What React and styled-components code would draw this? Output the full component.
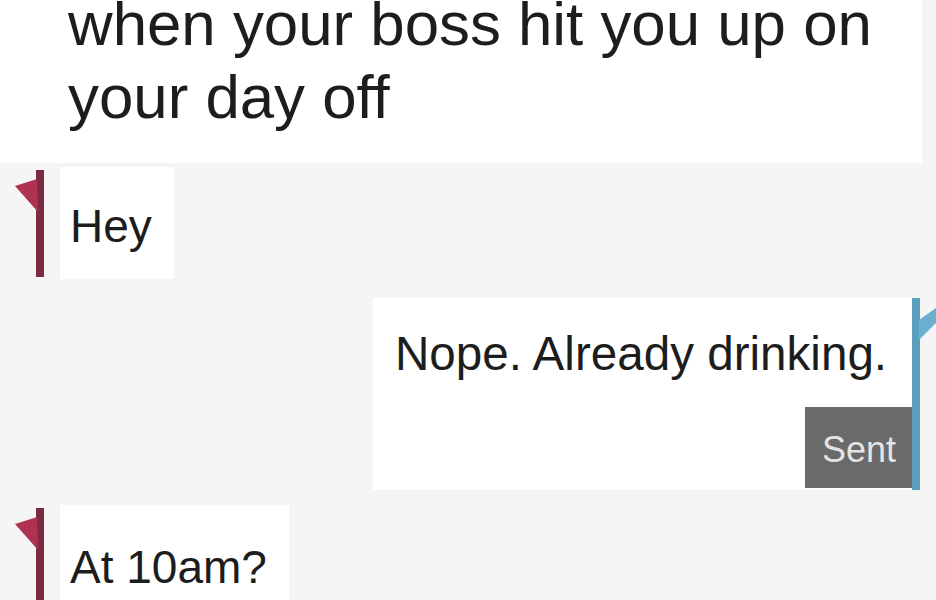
import React from "react";
import styled, { createGlobalStyle } from "styled-components";

function IncomingMarker({ height }) {
  return (
    <MarkerSlot>
      <svg width="60" height={height} viewBox={`0 0 60 ${height}`}>
        <rect x="36" y="0" width="8" height={height} fill="#7b2c40" />
        <polygon points="15,16 37,9 38,42" fill="#b03251" />
      </svg>
    </MarkerSlot>
  );
}

function OutgoingMarker() {
  return (
    <TailSlot>
      <svg width="24" height="192" viewBox="0 0 24 192">
        <rect x="0" y="0" width="8" height="192" fill="#5b9fbe" />
        <polygon points="7,22 24,10 24,25 7,42" fill="#6aafcf" />
      </svg>
    </TailSlot>
  );
}

function App() {
  return (
    <>
      <GlobalStyle />
      <Screen>
        <Caption>
          <CaptionText>
            when your boss hit you up on
            <br />
            your day off
          </CaptionText>
        </Caption>

        <Row $top={4}>
          <IncomingMarker height={107} />
          <Bubble $pt={36} $pb={30}>
            Hey
          </Bubble>
        </Row>

        <Row $top={19} $out>
          <OutBubble>
            <OutText>Nope. Already drinking.</OutText>
            <Status>Sent</Status>
          </OutBubble>
          <OutgoingMarker />
        </Row>

        <Row $top={15}>
          <IncomingMarker height={110} />
          <Bubble $pt={39} $pb={40}>
            At 10am?
          </Bubble>
        </Row>
      </Screen>
    </>
  );
}

export default App;

const GlobalStyle = createGlobalStyle`
  body {
    margin: 0;
    background: #f5f5f5;
    font-family: "Liberation Sans", Arial, sans-serif;
    color: #1d1d1d;
  }
`;

const Screen = styled.div`
  width: 936px;
  height: 600px;
  overflow: hidden;
  display: flex;
  flex-direction: column;
`;

const Caption = styled.div`
  width: 922px;
  height: 163px;
  flex-shrink: 0;
  box-sizing: border-box;
  padding-left: 68px;
  background: #ffffff;
  overflow: hidden;
  font-size: 61.8px;
  line-height: 73px;
`;

const CaptionText = styled.p`
  margin: -13px 0 0;
  white-space: nowrap;
`;

const Row = styled.div`
  display: flex;
  flex-shrink: 0;
  align-items: ${(p) => (p.$out ? "stretch" : "flex-start")};
  justify-content: ${(p) => (p.$out ? "flex-end" : "flex-start")};
  margin-top: ${(p) => p.$top}px;
`;

const MarkerSlot = styled.div`
  width: 60px;
  flex-shrink: 0;
  padding-top: 3px;
  line-height: 0;
`;

const TailSlot = styled.div`
  width: 24px;
  flex-shrink: 0;
  line-height: 0;
`;

const Bubble = styled.div`
  background: #ffffff;
  padding: ${(p) => p.$pt}px 22px ${(p) => p.$pb}px 10px;
  font-size: 46px;
  line-height: 46px;
  white-space: nowrap;
`;

const OutBubble = styled.div`
  display: flex;
  flex-direction: column;
  width: 539px;
  box-sizing: border-box;
  background: #ffffff;
  padding: 33px 0 2px 22px;
`;

const OutText = styled.div`
  font-size: 47.6px;
  line-height: 46px;
  white-space: nowrap;
`;

const Status = styled.div`
  align-self: flex-end;
  width: 108px;
  height: 81px;
  margin-top: 30px;
  margin-right: -1px;
  box-sizing: border-box;
  padding-top: 4px;
  display: flex;
  align-items: center;
  justify-content: center;
  background: #6a6a6a;
  color: #e4e4e4;
  font-size: 36px;
`;
